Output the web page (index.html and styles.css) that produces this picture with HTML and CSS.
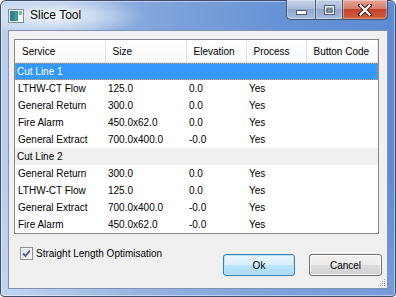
FILE: index.html
```html
<!DOCTYPE html>
<html>
  <head>
    <title>Slice Tool</title>
    <link rel="stylesheet" href="styles.css">
  </head>
  <body>
    <div class="window">
      <div class="titlebar">
        <svg class="app-icon" width="16" height="14" viewBox="0 0 16 14">
          <rect x="0.5" y="0.5" width="15" height="13" fill="#f4f7f8" stroke="#7d8c95"/>
          <rect x="2" y="2" width="8" height="10" fill="#3f9a8c"/>
          <rect x="2" y="2" width="4" height="10" fill="#2a7f92"/>
          <rect x="11" y="2" width="3" height="4" fill="#6fbf92"/>
        </svg>
        <span class="title">Slice Tool</span>
        <div class="caption">
          <div class="cap cap-min">
            <svg width="11" height="5" viewBox="0 0 11 5"><rect x="0.5" y="0.5" width="10" height="4" fill="#fff" stroke="#4a5a70"/></svg>
          </div>
          <div class="cap cap-max">
            <svg width="11" height="10" viewBox="0 0 11 10"><rect x="0.5" y="0.5" width="10" height="9" fill="none" stroke="#4a5a70"/><rect x="1.5" y="1.5" width="8" height="7" fill="none" stroke="#fff"/><rect x="3" y="4" width="5" height="3" fill="none" stroke="#4a5a70"/></svg>
          </div>
          <div class="cap cap-close">
            <svg width="14" height="12" viewBox="0 0 14 12"><path d="M2 1 L12 11 M12 1 L2 11" stroke="#5a1d14" stroke-width="4.2" stroke-linecap="square"/><path d="M2.5 1.5 L11.5 10.5 M11.5 1.5 L2.5 10.5" stroke="#fff" stroke-width="2.2" stroke-linecap="square"/></svg>
          </div>
        </div>
      </div>
      <div class="client">
        <div class="list">
          <table>
            <colgroup>
              <col class="c-service"><col class="c-size"><col class="c-elev"><col class="c-proc"><col>
            </colgroup>
            <thead>
              <tr><th>Service</th><th>Size</th><th>Elevation</th><th>Process</th><th>Button Code</th></tr>
            </thead>
            <tbody>
              <tr class="group selected"><td colspan="5">Cut Line 1</td></tr>
              <tr><td>LTHW-CT Flow</td><td>125.0</td><td>0.0</td><td>Yes</td><td></td></tr>
              <tr><td>General Return</td><td>300.0</td><td>0.0</td><td>Yes</td><td></td></tr>
              <tr><td>Fire Alarm</td><td>450.0x62.0</td><td>0.0</td><td>Yes</td><td></td></tr>
              <tr><td>General Extract</td><td>700.0x400.0</td><td>-0.0</td><td>Yes</td><td></td></tr>
              <tr class="group"><td colspan="5">Cut Line 2</td></tr>
              <tr><td>General Return</td><td>300.0</td><td>0.0</td><td>Yes</td><td></td></tr>
              <tr><td>LTHW-CT Flow</td><td>125.0</td><td>0.0</td><td>Yes</td><td></td></tr>
              <tr><td>General Extract</td><td>700.0x400.0</td><td>-0.0</td><td>Yes</td><td></td></tr>
              <tr><td>Fire Alarm</td><td>450.0x62.0</td><td>-0.0</td><td>Yes</td><td></td></tr>
            </tbody>
          </table>
        </div>
        <div class="footer">
          <label class="check">
            <span class="box">
              <svg width="9" height="9" viewBox="0 0 9 9"><path d="M1 4.5 L3.5 7 L8 1.5" fill="none" stroke="#4b5d8f" stroke-width="1.8"/></svg>
            </span>
            Straight Length Optimisation
          </label>
          <div class="buttons">
            <button class="btn btn-default">Ok</button>
            <button class="btn">Cancel</button>
          </div>
        </div>
        <svg class="grip" width="8" height="8" viewBox="0 0 8 8">
          <g fill="#a0a0a0">
            <rect x="6" y="0" width="1" height="1"/>
            <rect x="4" y="2" width="1" height="1"/><rect x="6" y="2" width="1" height="1"/>
            <rect x="2" y="4" width="1" height="1"/><rect x="4" y="4" width="1" height="1"/><rect x="6" y="4" width="1" height="1"/>
            <rect x="0" y="6" width="1" height="1"/><rect x="2" y="6" width="1" height="1"/><rect x="4" y="6" width="1" height="1"/><rect x="6" y="6" width="1" height="1"/>
          </g>
        </svg>
      </div>
    </div>
  </body>
</html>
```

FILE: styles.css
```css
body {
  margin: 0;
  font-family: "Liberation Sans", Arial, sans-serif;
  font-size: 10px;
  background: #fff;
}
.window {
  width: 396px;
  height: 297px;
  box-sizing: border-box;
  border: 1px solid #3d4f6b;
  border-radius: 6px 6px 4px 4px;
  padding: 0 7px 7px 7px;
  background:
    radial-gradient(ellipse 90px 22px at 55px 15px, rgba(255,255,255,0.85), rgba(255,255,255,0)),
    linear-gradient(to bottom, rgba(255,255,255,0) 60%, rgba(255,255,255,0.15)),
    linear-gradient(to right, #b9cfec, #85a8dc 35%, #6792d5 70%, #5d8bd3);
  box-shadow: inset 0 0 0 1px rgba(255,255,255,0.45);
}
.titlebar {
  height: 29px;
  display: flex;
  align-items: flex-start;
}
.app-icon {
  margin-top: 8px;
  margin-left: 0;
}
.title {
  margin-left: 6px;
  margin-top: 7px;
  font-size: 12px;
  color: #000;
  text-shadow: 0 0 6px #fff, 0 0 3px #fff;
}
.caption {
  margin-left: auto;
  margin-top: -1px;
  margin-right: 0;
  display: flex;
  height: 20px;
}
.cap {
  box-sizing: border-box;
  height: 20px;
  border: 1px solid #3f5472;
  border-top: none;
  display: flex;
  align-items: center;
  justify-content: center;
  box-shadow: inset 0 0 0 1px rgba(255,255,255,0.35);
}
.cap-min {
  width: 29px;
  border-radius: 0 0 0 5px;
  border-right: none;
  background: linear-gradient(#c3d1e6, #aabbd8 45%, #91a8cc 50%, #a7bde0);
}
.cap-min svg {
  margin-top: 6px;
}
.cap-max {
  width: 27px;
  border-right: none;
  background: linear-gradient(#c3d1e6, #aabbd8 45%, #91a8cc 50%, #a7bde0);
}
.cap-close {
  width: 46px;
  border-radius: 0 0 5px 0;
  background: linear-gradient(#e7a797, #d77d69 45%, #c3432c 50%, #d2623f);
}
.client {
  position: relative;
  height: 259px;
  box-sizing: border-box;
  border: 1px solid #7f93b0;
  background: #f0f0f0;
  padding: 8px 8px 0 5px;
}
.list {
  height: 195px;
  box-sizing: border-box;
  border: 1px solid #828790;
  background: #fff;
  overflow: hidden;
}
table {
  width: 100%;
  border-collapse: collapse;
  table-layout: fixed;
}
.c-service { width: 90px; }
.c-size { width: 81px; }
.c-elev { width: 60px; }
.c-proc { width: 60px; }
th {
  height: 22px;
  padding: 0 0 0 7px;
  text-align: left;
  font-weight: normal;
  color: #000;
  background: linear-gradient(#ffffff, #f7f8fa);
  border-right: 1px solid #e3e7ec;
  border-bottom: 1px solid #e5e5e5;
  white-space: nowrap;
  overflow: hidden;
}
td {
  height: 17px;
  padding: 0 0 0 3px;
  white-space: nowrap;
  overflow: hidden;
  color: #000;
}
tbody tr.group td {
  background: #f0f0f0;
  padding-left: 2px;
}
tbody tr.selected td {
  background: #3399ff;
  color: #fff;
  outline: 1px dotted #e09a4a;
  outline-offset: -1px;
}
.footer {
  display: flex;
  align-items: flex-start;
  padding: 0 0 0 6px;
}
.check {
  margin-top: 13px;
  display: flex;
  align-items: center;
  color: #000;
}
.box {
  width: 13px;
  height: 13px;
  box-sizing: border-box;
  border: 1px solid #8e8f8f;
  background: linear-gradient(135deg, #dcdcdc, #f8f8f8);
  display: flex;
  align-items: center;
  justify-content: center;
  margin-right: 3px;
  box-shadow: inset 0 0 0 1px #f4f4f4;
}
.buttons {
  margin-left: auto;
  margin-top: 20px;
  margin-right: -3px;
  display: flex;
  gap: 14px;
}
.btn {
  width: 73px;
  height: 22px;
  box-sizing: border-box;
  border: 1px solid #707070;
  border-radius: 3px;
  font-family: "Liberation Sans", Arial, sans-serif;
  font-size: 10px;
  color: #000;
  padding: 0;
  background: linear-gradient(#f2f2f2, #ebebeb 50%, #dddddd 50%, #cfcfcf);
  box-shadow: inset 0 0 0 1px rgba(255,255,255,0.8);
}
.btn-default {
  width: 72px;
  border-color: #3c7fb1;
  background: linear-gradient(#eaf6fd, #d9f0fc 50%, #bee6fd 50%, #a7d9f5);
  box-shadow: inset 0 0 0 1px #b9e3f9;
}
.grip {
  position: absolute;
  right: 1px;
  bottom: 1px;
}
```
